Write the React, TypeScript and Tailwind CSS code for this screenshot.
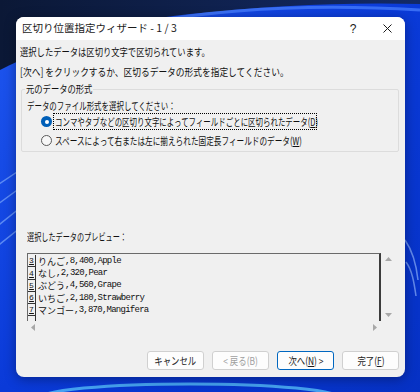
const rows = [
  { n: '3', jp: 'りんご', rest: ',8,400,Apple' },
  { n: '4', jp: 'なし', rest: ',2,320,Pear' },
  { n: '5', jp: 'ぶどう', rest: ',4,560,Grape' },
  { n: '6', jp: 'いちご', rest: ',2,180,Strawberry' },
  { n: '7', jp: 'マンゴー', rest: ',3,870,Mangifera' },
  { n: '', jp: '', rest: '' },
];

function Wallpaper() {
  return (
    <svg className="absolute inset-0" width="420" height="392" viewBox="0 0 420 392">
      <defs>
        <linearGradient id="blue" x1="0" y1="0" x2="1" y2="1">
          <stop offset="0" stopColor="#1f57f0" />
          <stop offset="0.5" stopColor="#0a3ad8" />
          <stop offset="1" stopColor="#0631c4" />
        </linearGradient>
        <linearGradient id="navy" x1="0" y1="0" x2="1" y2="0">
          <stop offset="0" stopColor="#0b1836" />
          <stop offset="1" stopColor="#132a66" />
        </linearGradient>
      </defs>
      <rect width="420" height="392" fill="url(#navy)" />
      <path d="M0 70 C50 45 110 22 190 14 C270 6 340 2 420 4 L420 392 L0 392 Z" fill="url(#blue)" />
      <path d="M150 22 C230 8 320 4 420 10" stroke="#4c82ff" strokeWidth="3" fill="none" opacity="0.7" />
      <path d="M-10 190 L20 170 M-10 210 L20 188 M-10 232 L20 208 M-10 252 L20 228" stroke="#8cb6ff" strokeWidth="1.5" opacity="0.6" />
      <path d="M405 240 C412 250 416 262 418 280 M406 262 C412 270 414 282 416 296" stroke="#9fc2ff" strokeWidth="1.5" fill="none" opacity="0.6" />
      <ellipse cx="190" cy="398" rx="150" ry="14" fill="none" stroke="#5fd0ff" strokeWidth="3" opacity="0.7" />
    </svg>
  );
}

// Japanese UI font is narrower than Noto, squeeze horizontally
function Sq({ s, children }: { s: string; children: React.ReactNode }) {
  return <span className={'inline-block origin-left ' + s}>{children}</span>;
}

function Radio({ checked }: { checked?: boolean }) {
  return checked ? (
    <span className="w-[11px] h-[11px] rounded-full bg-[#005fb8] flex items-center justify-center shrink-0">
      <span className="w-[4px] h-[4px] rounded-full bg-white" />
    </span>
  ) : (
    <span className="w-[11px] h-[11px] rounded-full border border-[#5a5a5a] bg-[#f7f7f7] shrink-0" />
  );
}

function Button({ children, primary, disabled }: { children: React.ReactNode; primary?: boolean; disabled?: boolean }) {
  return (
    <div
      className={
        'w-[57px] h-[19px] rounded-[3px] flex items-center justify-center text-[10.5px] bg-[#fdfdfd] border ' +
        (primary ? 'border-[#0067c0] ' : 'border-[#d0d0d0] ') +
        (disabled ? 'text-[#a0a0a0]' : 'text-[#1b1b1b]')
      }
    >
      <span className="inline-block scale-x-[0.8]">{children}</span>
    </div>
  );
}

export default function App() {
  return (
    <div className="relative w-[420px] h-[392px] overflow-hidden font-['Noto_Sans_CJK_JP',sans-serif] whitespace-nowrap">
      <Wallpaper />
      <div className="relative pl-[16px] pt-[17px]">
        <div className="w-[389px] h-[360px] rounded-[8px] overflow-hidden bg-[#f0f0f0] shadow-[0_2px_12px_rgba(0,0,0,0.35)] flex flex-col">
          {/* Title bar */}
          <div className="h-[23px] bg-white flex items-center pl-[6px] pr-[1px] shrink-0">
            <span className="flex-1 text-[10.5px] text-[#1b1b1b] leading-none">区切り位置指定ウィザード - 1 / 3</span>
            <span className="w-[34px] text-center text-[12px] text-[#1b1b1b] leading-none font-['Liberation_Sans',sans-serif]">?</span>
            <span className="w-[34px] flex justify-center">
              <svg width="9" height="9" viewBox="0 0 9 9">
                <path d="M0.5 0.5 L8.5 8.5 M8.5 0.5 L0.5 8.5" stroke="#1b1b1b" strokeWidth="1" />
              </svg>
            </span>
          </div>

          {/* Body */}
          <div className="flex flex-col pt-[5px] pl-[4px] pr-[6px] pb-[7px] text-[10.5px] text-[#111] leading-[14px]">
            <p><Sq s="scale-x-[0.79]">選択したデータは区切り文字で区切られています。</Sq></p>
            <p className="mt-[6px]"><Sq s="scale-x-[0.83]">[次へ] をクリックするか、区切るデータの形式を指定してください。</Sq></p>

            <fieldset className="mt-[3px] ml-[1px] w-[378px] border border-[#dcdcdc] rounded-[2px] pb-[2px]">
              <legend className="ml-[3px] px-[1px] w-[68px]"><Sq s="scale-x-[0.79]">元のデータの形式</Sq></legend>
              <p className="pt-[3px] pl-[5px]"><Sq s="scale-x-[0.71]">データのファイル形式を選択してください：</Sq></p>
              <div className="h-[17px] flex items-center pl-[19px] gap-[1px]">
                <Radio checked />
                <span className="h-[17px] w-[264px] flex items-center border border-dotted border-[#000] px-[1px]">
                  <Sq s="scale-x-[0.71]">コンマやタブなどの区切り文字によってフィールドごとに区切られたデータ(<u>D</u>)</Sq>
                </span>
              </div>
              <div className="h-[17px] mt-[2px] flex items-center pl-[19px] gap-[2px]">
                <Radio />
                <span className="px-[1px]">
                  <Sq s="scale-x-[0.727]">スペースによって右または左に揃えられた固定長フィールドのデータ(<u>W</u>)</Sq>
                </span>
              </div>
            </fieldset>

            <p className="mt-[78px] pl-[7px]"><Sq s="scale-x-[0.68]">選択したデータのプレビュー：</Sq></p>

            {/* Preview */}
            <div className="mt-[9px] ml-[7px] w-[368px] h-[81px] flex flex-col">
              <div className="h-[68px] flex">
                <div className="w-[354px] h-[68px] overflow-hidden border-t border-l border-r-2 border-t-[#6a6a6a] border-l-[#6a6a6a] border-r-[#3c3c3c] flex flex-col pt-[1px]">
                  {rows.map((r, i) => (
                    <div key={i} className="h-[12.3px] flex items-center shrink-0 leading-none">
                      <span className="w-[8px] h-[12.3px] border-r border-b border-[#333] flex items-end justify-center text-[8px] font-['Liberation_Mono',monospace] underline pb-[1px]">
                        {r.n}
                      </span>
                      <span className="pl-[2px] text-[9px] text-[#111]">{r.jp}</span>
                      <span className="text-[9px] tracking-[-0.75px] font-['Liberation_Mono',monospace] text-[#111]">{r.rest}</span>
                    </div>
                  ))}
                </div>
                <div className="w-[14px] flex flex-col items-center justify-between py-[4px]">
                  <svg width="7" height="4" viewBox="0 0 7 4"><path d="M0 4 L3.5 0 L7 4 Z" fill="#a8a8a8" /></svg>
                  <svg width="7" height="4" viewBox="0 0 7 4"><path d="M0 0 L3.5 4 L7 0 Z" fill="#a8a8a8" /></svg>
                </div>
              </div>
              <div className="h-[13px] w-[354px] flex items-center justify-between px-[4px]">
                <svg width="4" height="7" viewBox="0 0 4 7"><path d="M4 0 L0 3.5 L4 7 Z" fill="#a8a8a8" /></svg>
                <svg width="4" height="7" viewBox="0 0 4 7"><path d="M0 0 L4 3.5 L0 7 Z" fill="#a8a8a8" /></svg>
              </div>
            </div>

            {/* Buttons */}
            <div className="mt-[17px] flex justify-end gap-[8px]">
              <Button>キャンセル</Button>
              <Button disabled>&lt; 戻る(B)</Button>
              <Button primary>次へ(<u>N</u>) &gt;</Button>
              <Button>完了(<u>F</u>)</Button>
            </div>
          </div>
        </div>
      </div>
    </div>
  );
}
